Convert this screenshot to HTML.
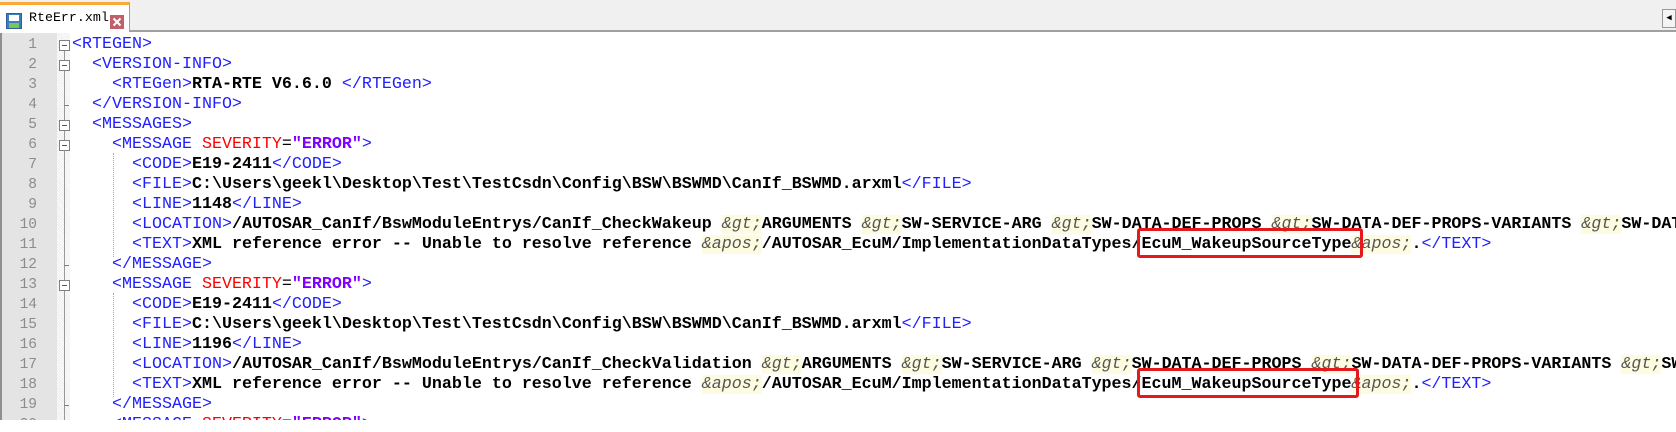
<!DOCTYPE html>
<html><head><meta charset="utf-8"><style>
body{margin:0;width:1676px;height:432px;overflow:hidden;background:#fff;position:relative;font-family:"Liberation Mono",monospace}
#tabbar{position:absolute;left:0;top:0;width:1676px;height:32px;background:#f0f0f0;border-bottom:2px solid #a0a0a0;box-sizing:border-box}
#tab{position:absolute;left:0;top:2px;width:130px;height:30px;background:#fff;border-right:1px solid #a0a0a0;border-top:3px solid #f9a937;box-sizing:border-box}
#tab .t{position:absolute;left:29px;top:5px;font-size:13.3px;color:#000;font-family:"Liberation Mono",monospace}
#gut{position:absolute;left:0;top:33px;width:57px;height:387px;background:#e4e4e4;border-left:2px solid #909090;box-sizing:border-box}
#fold{position:absolute;left:57px;top:33px;width:13px;height:387px;background:repeating-linear-gradient(45deg,#ececec 0 1px,#fff 1px 2px)}
#clip{position:absolute;left:0;top:33px;width:1676px;height:387px;overflow:hidden}
.l{position:absolute;left:72px;white-space:pre;font-size:16.67px;height:20px;line-height:20px}
.n{position:absolute;left:0;width:37px;text-align:right;color:#8c8c8c;font-size:14.5px;line-height:20px}
.g{color:#2020ff}
.b{font-weight:bold;color:#000}
.a{color:#f00}
.v{color:#8000ff;font-weight:bold}
.e{font-style:italic;color:#555;background:#fefce0}
.fb{position:absolute;left:59px;width:11px;height:11px;border:1px solid #808080;background:#fff;box-sizing:border-box}
.fb:after{content:"";position:absolute;left:2px;top:4px;width:5px;height:1px;background:#555}
.tk{position:absolute;left:64px;width:5px;height:1px;background:#808080}
.box{position:absolute;border:3px solid #e5191c;border-radius:3px;box-sizing:border-box}
</style></head><body>
<div id="tabbar">
<div id="tab">
<svg style="position:absolute;left:6px;top:8px" width="16" height="16"><rect x="0.5" y="0.5" width="15" height="15" fill="#3c7fc0" stroke="#2a5f99"/><rect x="3" y="2" width="10" height="6" fill="#fff"/><rect x="3" y="10" width="10" height="5" fill="#7cc35a"/></svg>
<span class="t">RteErr.xml</span>
<svg style="position:absolute;left:110px;top:10px" width="14" height="14"><rect width="14" height="14" fill="#c0606a"/><path d="M3.5 3.5L10.5 10.5M10.5 3.5L3.5 10.5" stroke="#fff" stroke-width="2"/></svg>
</div>
<div style="position:absolute;right:0;top:9px;width:14px;height:19px;border:1px solid #999;background:#f4f4f4;box-sizing:border-box;font-size:9px;line-height:17px;text-align:center">◀</div>
</div>
<div id="gut"></div><div id="fold"></div>
<div style="position:absolute;left:64px;top:50px;width:1px;height:370px;background:#999"></div>
<div style="position:absolute;left:113px;top:153px;width:0;height:104px;border-left:1px dotted #aaa"></div>
<div style="position:absolute;left:113px;top:293px;width:0;height:104px;border-left:1px dotted #aaa"></div>
<div id="clip">
<div class="n" style="top:2px">1</div><div class="n" style="top:22px">2</div><div class="n" style="top:42px">3</div><div class="n" style="top:62px">4</div><div class="n" style="top:82px">5</div><div class="n" style="top:102px">6</div><div class="n" style="top:122px">7</div><div class="n" style="top:142px">8</div><div class="n" style="top:162px">9</div><div class="n" style="top:182px">10</div><div class="n" style="top:202px">11</div><div class="n" style="top:222px">12</div><div class="n" style="top:242px">13</div><div class="n" style="top:262px">14</div><div class="n" style="top:282px">15</div><div class="n" style="top:302px">16</div><div class="n" style="top:322px">17</div><div class="n" style="top:342px">18</div><div class="n" style="top:362px">19</div><div class="n" style="top:382px">20</div>
<div class="fb" style="top:7px"></div><div class="fb" style="top:27px"></div><div class="fb" style="top:87px"></div><div class="fb" style="top:107px"></div><div class="fb" style="top:247px"></div>
<div class="tk" style="top:72px"></div><div class="tk" style="top:232px"></div><div class="tk" style="top:372px"></div>
<div style="position:absolute;left:58px;top:387px;width:11px;height:3px;background:#e00"></div>
<div class="l" style="top:2px"><span class="g">&lt;RTEGEN&gt;</span></div>
<div class="l" style="top:22px">  <span class="g">&lt;VERSION-INFO&gt;</span></div>
<div class="l" style="top:42px">    <span class="g">&lt;RTEGen&gt;</span><span class="b">RTA-RTE V6.6.0 </span><span class="g">&lt;/RTEGen&gt;</span></div>
<div class="l" style="top:62px">  <span class="g">&lt;/VERSION-INFO&gt;</span></div>
<div class="l" style="top:82px">  <span class="g">&lt;MESSAGES&gt;</span></div>
<div class="l" style="top:102px">    <span class="g">&lt;MESSAGE </span><span class="a">SEVERITY</span>=<span class="v">"ERROR"</span><span class="g">&gt;</span></div>
<div class="l" style="top:122px">      <span class="g">&lt;CODE&gt;</span><span class="b">E19-2411</span><span class="g">&lt;/CODE&gt;</span></div>
<div class="l" style="top:142px">      <span class="g">&lt;FILE&gt;</span><span class="b">C:\Users\geekl\Desktop\Test\TestCsdn\Config\BSW\BSWMD\CanIf_BSWMD.arxml</span><span class="g">&lt;/FILE&gt;</span></div>
<div class="l" style="top:162px">      <span class="g">&lt;LINE&gt;</span><span class="b">1148</span><span class="g">&lt;/LINE&gt;</span></div>
<div class="l" style="top:182px">      <span class="g">&lt;LOCATION&gt;</span><span class="b">/AUTOSAR_CanIf/BswModuleEntrys/CanIf_CheckWakeup </span><span class="e">&amp;gt;</span><span class="b">ARGUMENTS </span><span class="e">&amp;gt;</span><span class="b">SW-SERVICE-ARG </span><span class="e">&amp;gt;</span><span class="b">SW-DATA-DEF-PROPS </span><span class="e">&amp;gt;</span><span class="b">SW-DATA-DEF-PROPS-VARIANTS </span><span class="e">&amp;gt;</span><span class="b">SW-DATA</span></div>
<div class="l" style="top:202px">      <span class="g">&lt;TEXT&gt;</span><span class="b">XML reference error -- Unable to resolve reference </span><span class="e">&amp;apos;</span><span class="b">/AUTOSAR_EcuM/ImplementationDataTypes/EcuM_WakeupSourceType</span><span class="e">&amp;apos;</span><span class="b">.</span><span class="g">&lt;/TEXT&gt;</span></div>
<div class="l" style="top:222px">    <span class="g">&lt;/MESSAGE&gt;</span></div>
<div class="l" style="top:242px">    <span class="g">&lt;MESSAGE </span><span class="a">SEVERITY</span>=<span class="v">"ERROR"</span><span class="g">&gt;</span></div>
<div class="l" style="top:262px">      <span class="g">&lt;CODE&gt;</span><span class="b">E19-2411</span><span class="g">&lt;/CODE&gt;</span></div>
<div class="l" style="top:282px">      <span class="g">&lt;FILE&gt;</span><span class="b">C:\Users\geekl\Desktop\Test\TestCsdn\Config\BSW\BSWMD\CanIf_BSWMD.arxml</span><span class="g">&lt;/FILE&gt;</span></div>
<div class="l" style="top:302px">      <span class="g">&lt;LINE&gt;</span><span class="b">1196</span><span class="g">&lt;/LINE&gt;</span></div>
<div class="l" style="top:322px">      <span class="g">&lt;LOCATION&gt;</span><span class="b">/AUTOSAR_CanIf/BswModuleEntrys/CanIf_CheckValidation </span><span class="e">&amp;gt;</span><span class="b">ARGUMENTS </span><span class="e">&amp;gt;</span><span class="b">SW-SERVICE-ARG </span><span class="e">&amp;gt;</span><span class="b">SW-DATA-DEF-PROPS </span><span class="e">&amp;gt;</span><span class="b">SW-DATA-DEF-PROPS-VARIANTS </span><span class="e">&amp;gt;</span><span class="b">SW</span></div>
<div class="l" style="top:342px">      <span class="g">&lt;TEXT&gt;</span><span class="b">XML reference error -- Unable to resolve reference </span><span class="e">&amp;apos;</span><span class="b">/AUTOSAR_EcuM/ImplementationDataTypes/EcuM_WakeupSourceType</span><span class="e">&amp;apos;</span><span class="b">.</span><span class="g">&lt;/TEXT&gt;</span></div>
<div class="l" style="top:362px">    <span class="g">&lt;/MESSAGE&gt;</span></div>
<div class="l" style="top:382px">    <span class="g">&lt;MESSAGE </span><span class="a">SEVERITY</span>=<span class="v">"ERROR"</span><span class="g">&gt;</span></div>
</div>
<div style="position:absolute;left:0;top:420px;width:1676px;height:12px;background:#fff"></div>
<div class="box" style="left:1137px;top:228px;width:226px;height:30px"></div>
<div class="box" style="left:1137px;top:368px;width:222px;height:30px"></div>
</body></html>
